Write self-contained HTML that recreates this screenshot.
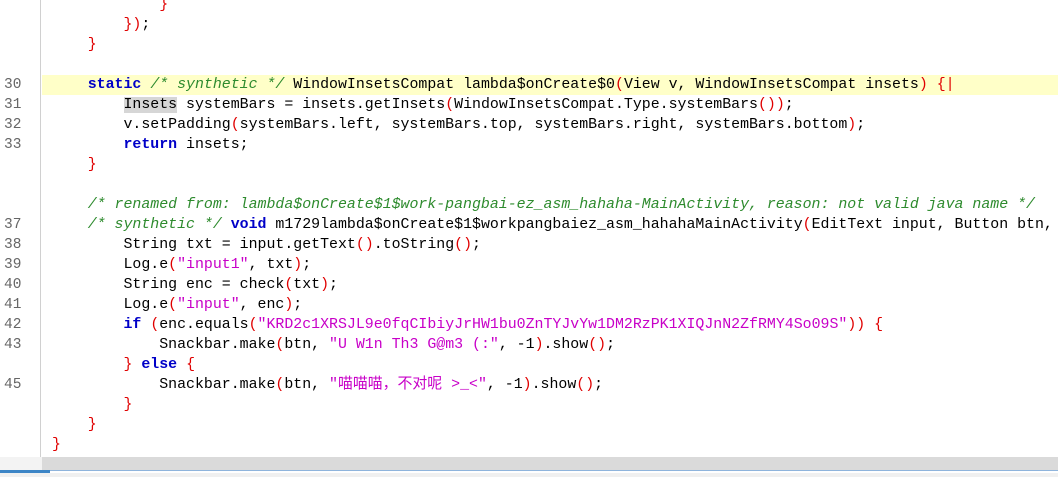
<!DOCTYPE html>
<html><head><meta charset="utf-8"><style>
html,body{margin:0;padding:0;width:1058px;height:477px;overflow:hidden;background:#fff}
#ed{position:absolute;left:0;top:0;width:1058px;height:457px}
.gut{position:absolute;left:40px;top:0;width:1px;height:457px;background:#d0d0d0}
.l{position:absolute;left:0;width:1058px;height:20px;line-height:20px;font-family:"Liberation Mono","Noto Sans CJK SC",monospace;font-size:14.9px;white-space:pre;color:#000}
.n{position:absolute;left:4px;width:22px;color:#666;font-size:14.5px}
.c{position:absolute;left:52px}
.hl{background:#ffffc8;left:42px;width:1016px}
.k{color:#0000c8;font-weight:bold}
.cm{color:#2e8b2e;font-style:italic}
.s{color:#c800c8}
.p{color:#e00000}
.ins{background:#d6d6d6}
</style></head><body>
<div id="ed">
<div class="gut"></div>
<div class="l hl" style="top:75px"></div>
<div class="l" style="top:-5px"><span class="c">            <span class="p">}</span></span></div>
<div class="l" style="top:15px"><span class="c">        <span class="p">})</span>;</span></div>
<div class="l" style="top:35px"><span class="c">    <span class="p">}</span></span></div>
<div class="l" style="top:75px"><span class="n">30</span><span class="c">    <span class="k">static</span> <span class="cm">/* synthetic */</span> WindowInsetsCompat lambda$onCreate$0<span class="p">(</span>View v, WindowInsetsCompat insets<span class="p">)</span> <span class="p">{</span><span class="p">|</span></span></div>
<div class="l" style="top:95px"><span class="n">31</span><span class="c">        <span class="ins">Insets</span> systemBars = insets.getInsets<span class="p">(</span>WindowInsetsCompat.Type.systemBars<span class="p">())</span>;</span></div>
<div class="l" style="top:115px"><span class="n">32</span><span class="c">        v.setPadding<span class="p">(</span>systemBars.left, systemBars.top, systemBars.right, systemBars.bottom<span class="p">)</span>;</span></div>
<div class="l" style="top:135px"><span class="n">33</span><span class="c">        <span class="k">return</span> insets;</span></div>
<div class="l" style="top:155px"><span class="c">    <span class="p">}</span></span></div>
<div class="l" style="top:195px"><span class="c">    <span class="cm">/* renamed from: lambda$onCreate$1$work-pangbai-ez_asm_hahaha-MainActivity, reason: not valid java name */</span></span></div>
<div class="l" style="top:215px"><span class="n">37</span><span class="c">    <span class="cm">/* synthetic */</span> <span class="k">void</span> m1729lambda$onCreate$1$workpangbaiez_asm_hahahaMainActivity<span class="p">(</span>EditText input, Button btn,</span></div>
<div class="l" style="top:235px"><span class="n">38</span><span class="c">        String txt = input.getText<span class="p">()</span>.toString<span class="p">()</span>;</span></div>
<div class="l" style="top:255px"><span class="n">39</span><span class="c">        Log.e<span class="p">(</span><span class="s">"input1"</span>, txt<span class="p">)</span>;</span></div>
<div class="l" style="top:275px"><span class="n">40</span><span class="c">        String enc = check<span class="p">(</span>txt<span class="p">)</span>;</span></div>
<div class="l" style="top:295px"><span class="n">41</span><span class="c">        Log.e<span class="p">(</span><span class="s">"input"</span>, enc<span class="p">)</span>;</span></div>
<div class="l" style="top:315px"><span class="n">42</span><span class="c">        <span class="k">if</span> <span class="p">(</span>enc.equals<span class="p">(</span><span class="s">"KRD2c1XRSJL9e0fqCIbiyJrHW1bu0ZnTYJvYw1DM2RzPK1XIQJnN2ZfRMY4So09S"</span><span class="p">))</span> <span class="p">{</span></span></div>
<div class="l" style="top:335px"><span class="n">43</span><span class="c">            Snackbar.make<span class="p">(</span>btn, <span class="s">"U W1n Th3 G@m3 (:"</span>, -1<span class="p">)</span>.show<span class="p">()</span>;</span></div>
<div class="l" style="top:355px"><span class="c">        <span class="p">}</span> <span class="k">else</span> <span class="p">{</span></span></div>
<div class="l" style="top:375px"><span class="n">45</span><span class="c">            Snackbar.make<span class="p">(</span>btn, <span class="s">"喵喵喵，不对呢 &gt;_&lt;"</span>, -1<span class="p">)</span>.show<span class="p">()</span>;</span></div>
<div class="l" style="top:395px"><span class="c">        <span class="p">}</span></span></div>
<div class="l" style="top:415px"><span class="c">    <span class="p">}</span></span></div>
<div class="l" style="top:435px"><span class="c"><span class="p">}</span></span></div>
</div>
<div style="position:absolute;left:0;top:457px;width:42px;height:13px;background:#f3f3f3"></div>
<div style="position:absolute;left:42px;top:457px;width:1016px;height:13px;background:#dadada"></div>
<div style="position:absolute;left:0;top:470px;width:1058px;height:1px;background:#8fb4dc"></div>
<div style="position:absolute;left:0;top:470px;width:50px;height:3px;background:#3d85c6"></div>
<div style="position:absolute;left:0;top:473px;width:1058px;height:4px;background:#f0f0f0"></div>
</body></html>
